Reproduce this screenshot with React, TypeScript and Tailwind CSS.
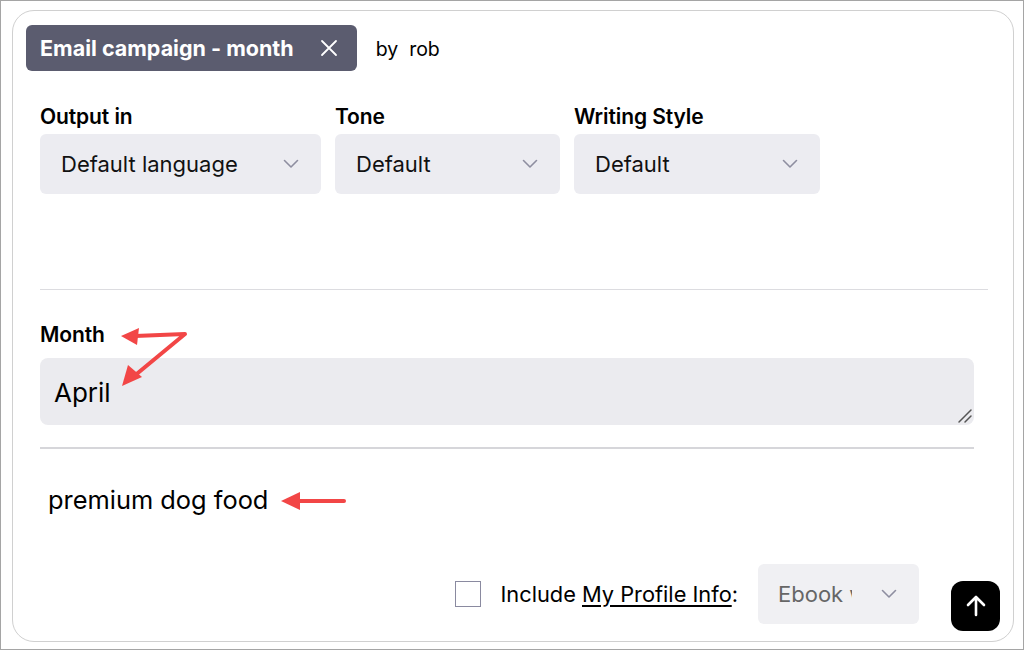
import React from "react";

function Chevron() {
    return (
        <svg width="16" height="10" viewBox="0 0 16 10" fill="none">
            <polyline points="1.5,1.5 8,8 14.5,1.5" stroke="#8e8ea0" strokeWidth="1.6" strokeLinecap="round" strokeLinejoin="round" />
        </svg>
    );
}

function Select({ label, value, width }: { label: string; value: string; width: string }) {
    return (
        <div className={`flex flex-col ${width}`}>
            <span className="text-[21px] font-semibold leading-6 tracking-[-0.1px] text-black">{label}</span>
            <div className="mt-[5px] flex h-[60px] items-center justify-between rounded-md bg-[#ececf1] pl-[21px] pr-[22px]">
                <span className="text-[22px] text-[#111]">{value}</span>
                <Chevron />
            </div>
        </div>
    );
}

function Arrows() {
    return (
        <svg className="pointer-events-none absolute left-0 top-0" width="1024" height="650" viewBox="0 0 1024 650" fill="none">
            <g stroke="#f24646" strokeWidth="4" strokeLinecap="round" strokeLinejoin="round">
                <polyline points="134,335 184,333 132,376" />
                <line x1="294" y1="500" x2="343" y2="500" />
            </g>
            <g fill="#f24646">
                <polygon points="120,335 138,327 136,344" />
                <polygon points="121,385 127,364 141,376" />
                <polygon points="280,500 299,491 299,509" />
            </g>
        </svg>
    );
}

export default function App() {
    return (
        <div
            className="relative h-[650px] w-[1024px] overflow-hidden border border-[#a5a5a5] bg-white"
            style={{ fontFamily: "Inter, 'Noto Sans', sans-serif" }}
        >
            <div className="ml-[11px] mt-[9px] flex h-[632px] w-[1002px] flex-col rounded-[22px] border border-[#d0d0d0] bg-white">
                <div className="flex items-center pl-[13px] pt-[14px]">
                    <div className="flex h-[46px] items-center rounded-md bg-[#5b5c6f] pl-[14px] pr-[19px]">
                        <span className="text-[21.5px] font-bold text-white">Email campaign - month</span>
                        <svg className="ml-[26px]" width="18" height="18" viewBox="0 0 18 18" fill="none">
                            <path d="M2 2L16 16M16 2L2 16" stroke="white" strokeWidth="1.8" strokeLinecap="round" />
                        </svg>
                    </div>
                    <span className="ml-[19px] pt-[3px] text-[19.5px] text-black">
                        by&nbsp; rob
                    </span>
                </div>

                <div className="flex flex-col pl-[27px] pr-[39px]">
                    <div className="mt-[34px] flex gap-[14px]">
                        <Select label="Output in" value="Default language" width="w-[281px]" />
                        <Select label="Tone" value="Default" width="w-[225px]" />
                        <Select label="Writing Style" value="Default" width="w-[246px]" />
                    </div>

                    <div className="-mr-[14px] mt-[95px] h-px bg-[#dcdce0]" />

                    <span className="mt-[33px] text-[21px] font-semibold leading-6 tracking-[-0.1px] text-black">Month</span>
                    <div className="relative mt-[11px] flex h-[67px] items-center rounded-lg bg-[#ebebef] px-[14px]">
                        <span className="pt-[2px] text-[26px] text-black">April</span>
                        <svg className="absolute bottom-[1px] right-[1px]" width="16" height="16" viewBox="0 0 16 16" fill="none">
                            <path d="M2 14L14 2M8 14L14 8" stroke="#555" strokeWidth="1.5" strokeLinecap="round" />
                        </svg>
                    </div>

                    <div className="mt-[22px] h-[2px] bg-[#d6d6da]" />

                    <span className="mt-[35px] pl-[8px] text-[25.4px] leading-8 text-black">premium dog food</span>

                    <div className="mt-[48px] flex items-start justify-end">
                        <div className="flex h-[60px] items-center">
                            <div className="h-[26px] w-[26px] border border-[#8a8aa0] bg-white" />
                            <span className="ml-[19px] text-[21.8px] text-black">
                                Include <span className="underline underline-offset-[3px]">My Profile Info</span>:
                            </span>
                            <div className="ml-[20px] flex h-[60px] w-[161px] items-center justify-between rounded-md bg-[#f0f0f3] pl-[20px] pr-[22px]">
                                <span className="w-[74px] overflow-hidden whitespace-nowrap text-[22px] text-[#666]">Ebook w</span>
                                <Chevron />
                            </div>
                        </div>
                        <div className="-mr-[26px] ml-[32px] mt-[17px] flex h-[50px] w-[49px] items-center justify-center rounded-xl bg-black">
                            <svg width="22" height="24" viewBox="0 0 22 24" fill="none">
                                <path d="M11 21V3M3 11L11 3L19 11" stroke="white" strokeWidth="2.6" strokeLinecap="round" strokeLinejoin="round" />
                            </svg>
                        </div>
                    </div>
                </div>
            </div>
            <Arrows />
        </div>
    );
}
